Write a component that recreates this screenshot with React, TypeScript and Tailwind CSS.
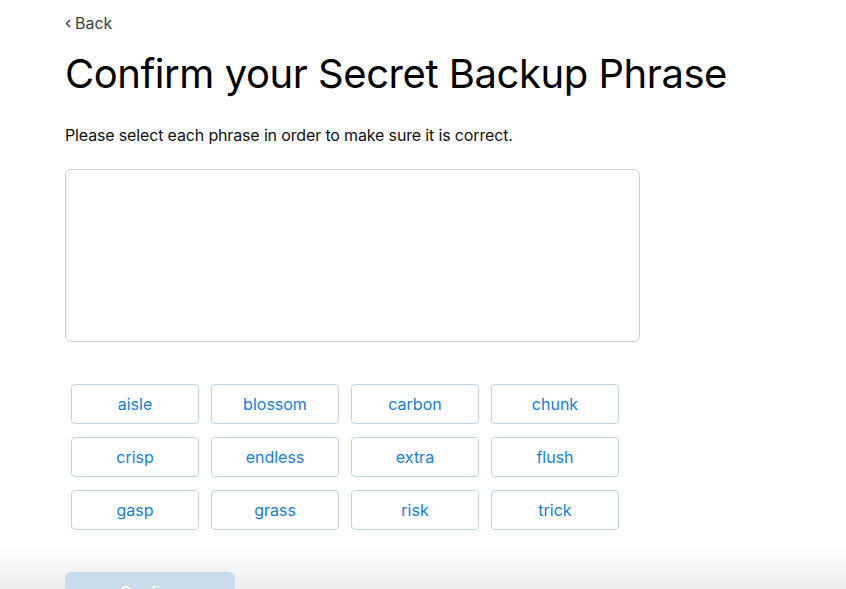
const words = [
  "aisle",
  "blossom",
  "carbon",
  "chunk",
  "crisp",
  "endless",
  "extra",
  "flush",
  "gasp",
  "grass",
  "risk",
  "trick",
];

export default function App() {
  return (
    <div
      className="h-[589px] overflow-hidden bg-white flex flex-col"
      style={{ fontFamily: "Inter, 'Noto Sans', sans-serif" }}
    >
      <div className="px-[65px] pt-[13px]">
        {/* Back link */}
        <button className="flex items-center gap-[4px] text-[16px] leading-[20px] text-[#3c3f42]">
          <svg width="6" height="9" viewBox="0 0 6 9" fill="none">
            <path d="M5 1L1.5 4.5L5 8" stroke="#3c3f42" strokeWidth="1.4" />
          </svg>
          <span>Back</span>
        </button>

        <h1 className="mt-[17px] text-[40px] leading-[48px] font-normal text-black tracking-[-0.45px]">
          Confirm your Secret Backup Phrase
        </h1>

        <p className="mt-[27px] text-[16px] leading-[20px] text-[#111] tracking-[-0.15px]">
          Please select each phrase in order to make sure it is correct.
        </p>

        {/* Selected words area */}
        <div className="mt-[24px] w-[575px] h-[173px] border border-[#cfcfcf] rounded-[6px]" />

        {/* Word choices */}
        <div className="mt-[42px] ml-[6px] grid grid-cols-[repeat(4,128px)] gap-x-[12px] gap-y-[13px]">
          {words.map((w) => (
            <button
              key={w}
              className="h-[40px] border border-[#b9d6ec] rounded-[4px] text-[#1a7ed4] text-[16px] bg-white"
            >
              {w}
            </button>
          ))}
        </div>
      </div>

      {/* Footer */}
      <div className="mt-[15px] flex-1 bg-gradient-to-b from-white to-[#e3e3e3] px-[65px] pt-[27px]">
        <button className="w-[170px] h-[40px] rounded-[6px] bg-[#c9dceb] text-white text-[16px] leading-[20px]">
          Confirm
        </button>
      </div>
    </div>
  );
}
